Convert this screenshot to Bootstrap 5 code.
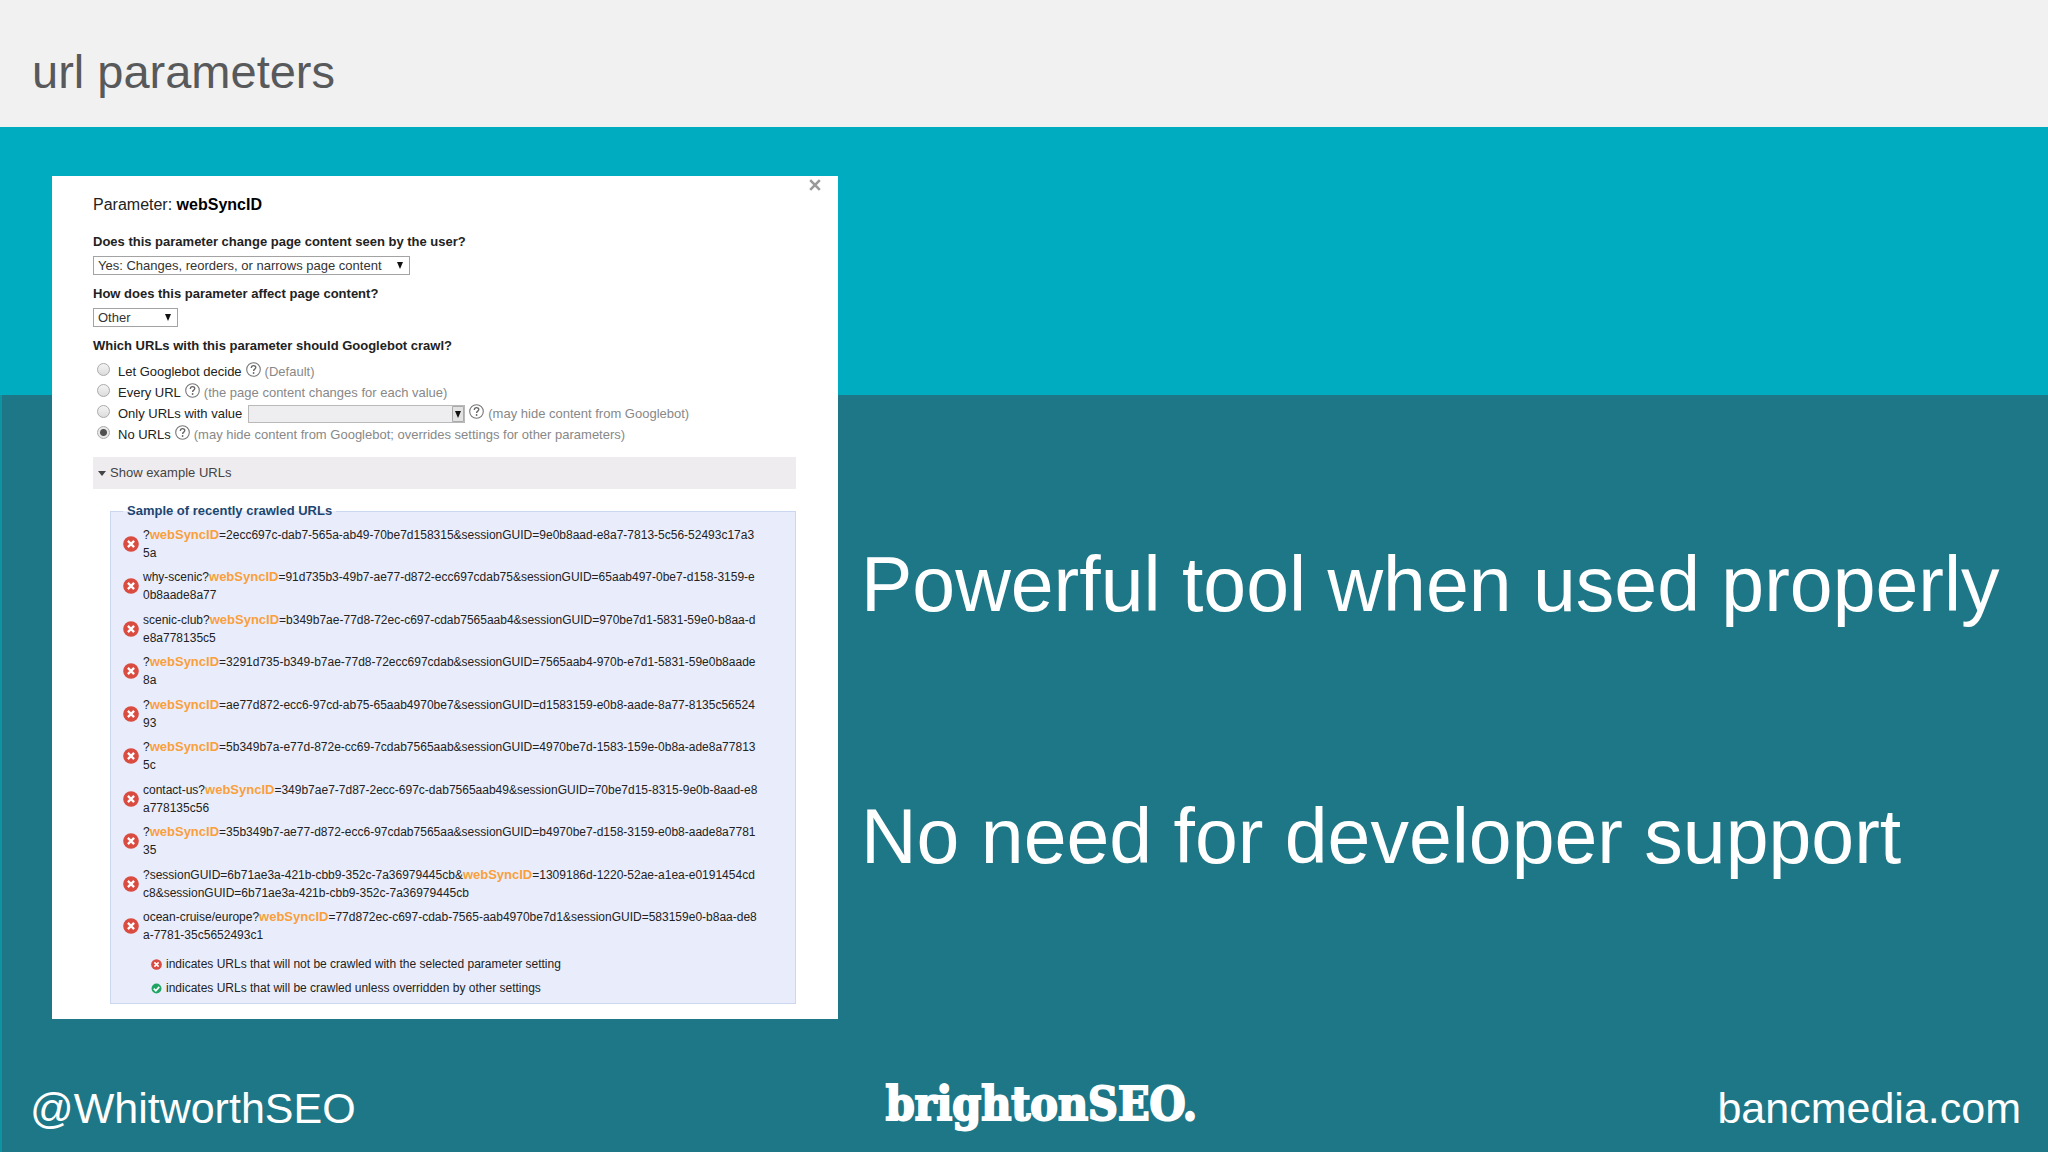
<!DOCTYPE html>
<html lang="en">
<head>
<meta charset="utf-8">
<meta name="viewport" content="width=device-width, initial-scale=1">
<title>url parameters</title>
<link href="https://cdn.jsdelivr.net/npm/bootstrap@5.3.0/dist/css/bootstrap.min.css" rel="stylesheet">
<style>
  body { font-family: "Liberation Sans", Arial, sans-serif; background: linear-gradient(#0e93a3, #0e93a3) 0 0 / 2px 100% no-repeat #1e7786; }
  .slide-head { background: #f1f1f2; padding: 44px 32px 27px; }
  .slide-head h1 { font-size: 47px; line-height: 56px; color: #58595b; }
  .slide-body {
    padding: 49px 32px 24px 52px;
    background: linear-gradient(#00adc0, #00adc0) 0 0 / 100% 268px no-repeat;
  }
  .panel-col { flex: 0 0 786px; max-width: 100%; }
  .param-panel { background: #fff; color: #222; font-size: 13px; line-height: 18px; padding: 19px 42px 15px 41px; }
  .param-title { font-size: 16px; line-height: 20px; color: #222; margin-bottom: 18px; }
  .param-title b { color: #000; }
  .close-x { top: 1px; right: 15px; padding: 0; border: 0; background: none; line-height: 0; }
  .question { font-weight: 700; display: block; margin-bottom: 5px; }
  .pick {
    display: block; appearance: none; height: 19px; margin-bottom: 10px; padding: 0 22px 0 4px;
    border: 1px solid #a3a3a3; border-radius: 0; color: #333; font-size: 13px; line-height: 16px;
    background: #fff url("data:image/svg+xml,%3Csvg xmlns='http://www.w3.org/2000/svg' viewBox='0 0 8 8'%3E%3Cpath fill='%23111' d='M1 0h6L4 7z'/%3E%3C/svg%3E") right 5px center / 8px 8px no-repeat;
  }
  .pick-wide { width: 317px; }
  .pick-short { width: 85px; }
  .choices { padding-top: 1px; }
  .choice { height: 21px; color: #888; }
  .choice label { color: #222; margin: 0 4px 0 8px; }
  .choice input { appearance: none; width: 13px; height: 13px; margin: 0 0 5px 4px; border: 1px solid #aaa; border-radius: 50%; background: linear-gradient(#f4f4f4, #dcdcdc); }
  .choice input:checked { background: radial-gradient(circle, #505050 0 3px, #e8e8e8 4px); }
  .help { margin: 0 4px 5px 0; flex: none; }
  .value-pick {
    width: 217px; height: 18px; margin: 0 4px 0 2px; appearance: none; border: 1px solid #b9b9b9; border-radius: 0; opacity: 1;
    background:
      url("data:image/svg+xml,%3Csvg xmlns='http://www.w3.org/2000/svg' viewBox='0 0 12 16'%3E%3Cpath fill='%23e2e2e2' stroke='%23aaa' d='M.5.5h11v15H.5z'/%3E%3Cpath fill='%23111' d='M3 5h6L6 12z'/%3E%3C/svg%3E") right center / 12px 16px no-repeat,
      #eeeef0;
  }
  .examples-toggle { display: flex; align-items: center; width: 100%; height: 32px; margin: 12px 0 13px; padding: 0 5px; gap: 4px; border: 0; background: #eeecee; color: #444; }
  .sample { margin-left: 17px; border: 1px solid #cbd7ee; background: #e9edfb; padding: 6px 10px 6px 12px; }
  .sample legend { float: none; width: auto; margin: 0; padding: 0 4px; font-size: 13px; line-height: 18px; font-weight: 700; color: #1c4670; }
  .url-list { font-size: 12px; min-height: 418px; }
  .url-list b { color: #f9a03c; font-size: 13px; line-height: 16px; }
  .keys { font-size: 12px; padding: 11px 0 0 28px; gap: 6px; }
  .points { color: #fff; font-size: 77px; line-height: 92px; padding-left: 23px; padding-top: 362px; gap: 160px; }
  .slide-foot { padding: 0 27px 18px 30px; font-size: 43px; line-height: 52px; }
  .slide-foot a { color: #fff; text-decoration: none; flex: 1 1 0; }
  .brand-word { font-family: "DejaVu Serif Condensed", "DejaVu Serif", serif; font-stretch: condensed; font-weight: 700; font-size: 46px; line-height: 44px; margin: 0 0 8px 32px; color: #fff; -webkit-text-stroke: 2px #fff; }
</style>
</head>
<body class="d-flex flex-column min-vh-100">
<svg class="d-none" xmlns="http://www.w3.org/2000/svg">
  <symbol id="i-help" viewBox="0 0 15 15"><circle cx="7.5" cy="7.5" r="6.8" fill="none" stroke="#777" stroke-width="1.1"/><path d="M5.3 5.9c0-3 4.5-2.9 4.5-.3 0 1.5-2.2 1.6-2.2 3.3" fill="none" stroke="#666" stroke-width="1.3"/><circle cx="7.6" cy="11" r=".9" fill="#666"/></symbol>
  <symbol id="i-no" viewBox="0 0 16 16"><circle cx="8" cy="8" r="7.8" fill="#da4b40"/><path d="M4.9 4.9l6.2 6.2M11.1 4.9l-6.2 6.2" stroke="#fff" stroke-width="2.3"/></symbol>
  <symbol id="i-yes" viewBox="0 0 16 16"><circle cx="8" cy="8" r="7.2" fill="#1fa463"/><path d="M4 8.2l3 3 5-5.6" fill="none" stroke="#fff" stroke-width="2.4"/></symbol>
</svg>

<header class="slide-head"><h1 class="m-0 fw-normal">url parameters</h1></header>

<main class="slide-body flex-grow-1 d-flex align-items-start">
  <section class="panel-col">
    <form class="param-panel position-relative">
      <button type="button" class="close-x position-absolute" aria-label="Close"><svg width="16" height="16" viewBox="0 0 16 16"><path d="M3.2 3.2l9.6 9.6M12.8 3.2l-9.6 9.6" stroke="#9a9a9a" stroke-width="2.6"/></svg></button>
      <h2 class="param-title fw-normal">Parameter: <b>webSyncID</b></h2>

      <label class="question" for="changes">Does this parameter change page content seen by the user?</label>
      <select id="changes" class="pick pick-wide"><option>Yes: Changes, reorders, or narrows page content</option></select>
      <label class="question" for="affects">How does this parameter affect page content?</label>
      <select id="affects" class="pick pick-short"><option>Other</option></select>

      <span id="crawl-q" class="question">Which URLs with this parameter should Googlebot crawl?</span>
      <div class="choices" role="radiogroup" aria-labelledby="crawl-q">
        <div class="choice d-flex align-items-center"><input type="radio" name="crawl" id="c1"><label for="c1">Let Googlebot decide</label><svg class="help" width="15" height="15"><use href="#i-help"/></svg><span>(Default)</span></div>
        <div class="choice d-flex align-items-center"><input type="radio" name="crawl" id="c2"><label for="c2">Every URL</label><svg class="help" width="15" height="15"><use href="#i-help"/></svg><span>(the page content changes for each value)</span></div>
        <div class="choice d-flex align-items-center"><input type="radio" name="crawl" id="c3"><label for="c3">Only URLs with value</label><select class="value-pick" aria-label="Value" disabled><option></option></select><svg class="help" width="15" height="15"><use href="#i-help"/></svg><span>(may hide content from Googlebot)</span></div>
        <div class="choice d-flex align-items-center"><input type="radio" name="crawl" id="c4" checked><label for="c4">No URLs</label><svg class="help" width="15" height="15"><use href="#i-help"/></svg><span>(may hide content from Googlebot; overrides settings for other parameters)</span></div>
      </div>

      <button type="button" class="examples-toggle"><svg width="8" height="5" viewBox="0 0 8 5"><path d="M0 0h8L4 5z" fill="#444"/></svg>Show example URLs</button>

      <fieldset class="sample">
        <legend>Sample of recently crawled URLs</legend>
        <ul class="url-list list-unstyled d-flex flex-column justify-content-between mb-0">
          <li class="d-flex align-items-center gap-1"><svg width="16" height="16"><use href="#i-no"/></svg><span>?<b>webSyncID</b>=2ecc697c-dab7-565a-ab49-70be7d158315&amp;sessionGUID=9e0b8aad-e8a7-7813-5c56-52493c17a3<br>5a</span></li>
          <li class="d-flex align-items-center gap-1"><svg width="16" height="16"><use href="#i-no"/></svg><span>why-scenic?<b>webSyncID</b>=91d735b3-49b7-ae77-d872-ecc697cdab75&amp;sessionGUID=65aab497-0be7-d158-3159-e<br>0b8aade8a77</span></li>
          <li class="d-flex align-items-center gap-1"><svg width="16" height="16"><use href="#i-no"/></svg><span>scenic-club?<b>webSyncID</b>=b349b7ae-77d8-72ec-c697-cdab7565aab4&amp;sessionGUID=970be7d1-5831-59e0-b8aa-d<br>e8a778135c5</span></li>
          <li class="d-flex align-items-center gap-1"><svg width="16" height="16"><use href="#i-no"/></svg><span>?<b>webSyncID</b>=3291d735-b349-b7ae-77d8-72ecc697cdab&amp;sessionGUID=7565aab4-970b-e7d1-5831-59e0b8aade<br>8a</span></li>
          <li class="d-flex align-items-center gap-1"><svg width="16" height="16"><use href="#i-no"/></svg><span>?<b>webSyncID</b>=ae77d872-ecc6-97cd-ab75-65aab4970be7&amp;sessionGUID=d1583159-e0b8-aade-8a77-8135c56524<br>93</span></li>
          <li class="d-flex align-items-center gap-1"><svg width="16" height="16"><use href="#i-no"/></svg><span>?<b>webSyncID</b>=5b349b7a-e77d-872e-cc69-7cdab7565aab&amp;sessionGUID=4970be7d-1583-159e-0b8a-ade8a77813<br>5c</span></li>
          <li class="d-flex align-items-center gap-1"><svg width="16" height="16"><use href="#i-no"/></svg><span>contact-us?<b>webSyncID</b>=349b7ae7-7d87-2ecc-697c-dab7565aab49&amp;sessionGUID=70be7d15-8315-9e0b-8aad-e8<br>a778135c56</span></li>
          <li class="d-flex align-items-center gap-1"><svg width="16" height="16"><use href="#i-no"/></svg><span>?<b>webSyncID</b>=35b349b7-ae77-d872-ecc6-97cdab7565aa&amp;sessionGUID=b4970be7-d158-3159-e0b8-aade8a7781<br>35</span></li>
          <li class="d-flex align-items-center gap-1"><svg width="16" height="16"><use href="#i-no"/></svg><span>?sessionGUID=6b71ae3a-421b-cbb9-352c-7a36979445cb&amp;<b>webSyncID</b>=1309186d-1220-52ae-a1ea-e0191454cd<br>c8&amp;sessionGUID=6b71ae3a-421b-cbb9-352c-7a36979445cb</span></li>
          <li class="d-flex align-items-center gap-1"><svg width="16" height="16"><use href="#i-no"/></svg><span>ocean-cruise/europe?<b>webSyncID</b>=77d872ec-c697-cdab-7565-aab4970be7d1&amp;sessionGUID=583159e0-b8aa-de8<br>a-7781-35c5652493c1</span></li>
        </ul>
        <div class="keys d-flex flex-column">
          <div class="d-flex align-items-center gap-1"><svg width="11" height="11"><use href="#i-no"/></svg>indicates URLs that will not be crawled with the selected parameter setting</div>
          <div class="d-flex align-items-center gap-1"><svg width="11" height="11"><use href="#i-yes"/></svg>indicates URLs that will be crawled unless overridden by other settings</div>
        </div>
      </fieldset>
    </form>
  </section>
  <section class="points flex-grow-1 d-flex flex-column text-nowrap">
    <p class="m-0">Powerful tool when used properly</p>
    <p class="m-0">No need for developer support</p>
  </section>
</main>

<footer class="slide-foot d-flex align-items-center">
  <a href="#">@WhitworthSEO</a>
  <span class="brand-word">brightonSEO.</span>
  <a href="#" class="text-end">bancmedia.com</a>
</footer>
<script src="https://cdn.jsdelivr.net/npm/bootstrap@5.3.0/dist/js/bootstrap.bundle.min.js"></script>
</body>
</html>
